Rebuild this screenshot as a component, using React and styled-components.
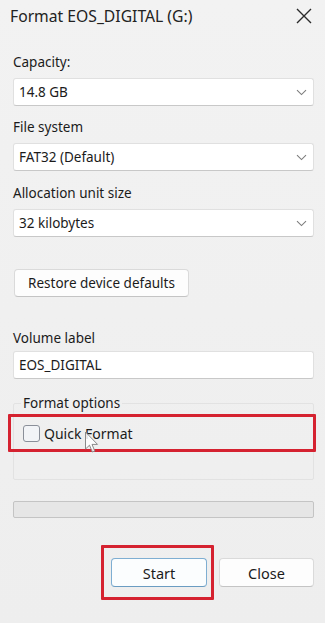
import React from 'react';
import styled, { createGlobalStyle } from 'styled-components';

const GlobalStyle = createGlobalStyle`
  html, body {
    margin: 0;
    padding: 0;
    background: #f0f0f0;
  }
  body {
    font-family: "Noto Sans", "Open Sans", "Liberation Sans", sans-serif;
    color: #1b1b1b;
  }
`;

const Window = styled.div`
  width: 325px;
  height: 623px;
  box-sizing: border-box;
  background: linear-gradient(#f2f2f2, #eeeeee);
  position: relative;
  overflow: hidden;
`;

const TitleBar = styled.div`
  height: 32px;
  display: flex;
  align-items: center;
  justify-content: space-between;
  padding: 0 13px 0 10px;
`;

const Title = styled.div`
  font-size: 15.7px;
  color: #222;
`;

const CloseIcon = styled.svg`
  width: 16px;
  height: 16px;
  display: block;
`;

const Body = styled.div`
  padding: 20px 11px 0 13px;
  display: flex;
  flex-direction: column;
`;

const Label = styled.div`
  font-size: 13.5px;
  line-height: 20px;
  height: 20px;
  margin-top: ${(p) => p.$top || 0}px;
`;

const Box = styled.div`
  height: 28px;
  box-sizing: border-box;
  margin-top: ${(p) => p.$top || 6}px;
  background: #fff;
  border: 1px solid #e0e0e0;
  border-bottom-color: #c8c8c8;
  border-radius: 3px;
  display: flex;
  align-items: center;
  justify-content: space-between;
  padding: 0 6px 0 5px;
  font-size: 13.5px;
`;

const Chevron = styled.svg`
  width: 11px;
  height: 7px;
  display: block;
`;

const RestoreButton = styled.button`
  align-self: flex-start;
  margin-top: 32px;
  margin-left: 1px;
  width: 175px;
  height: 28px;
  box-sizing: border-box;
  background: #fdfdfd;
  border: 1px solid #dadada;
  border-bottom-color: #c4c4c4;
  border-radius: 4px;
  font-family: inherit;
  font-size: 13.5px;
  color: #1b1b1b;
  padding: 0;
`;

const Group = styled.fieldset`
  margin: 14px 0 0;
  padding: 1px 0 27px;
  border: 1px solid #e2e2e2;
  border-radius: 2px;
  min-width: 0;
`;

const Legend = styled.legend`
  margin-left: 7px;
  padding: 0 2px;
  font-size: 13.5px;
  line-height: 20px;
`;

const Highlight = styled.div`
  border: 3px solid #d52230;
  border-radius: 1px;
  box-sizing: border-box;
  ${(p) => p.$wide && `
    margin: 0 -3px 0 -6px;
    height: 38px;
    display: flex;
    align-items: center;
    padding-left: 12px;
  `}
  ${(p) => p.$button && `
    padding: 10px 4px 10px 7px;
  `}
`;

const Check = styled.span`
  width: 17px;
  height: 17px;
  box-sizing: border-box;
  border: 1px solid #8a8f99;
  border-radius: 3px;
  background: #f2f4f7;
`;

const CheckText = styled.span`
  margin-left: 4px;
  font-size: 14px;
  color: #1b1b1b;
`;

const Progress = styled.div`
  margin-top: 21px;
  height: 17px;
  box-sizing: border-box;
  background: #e6e6e6;
  border: 1px solid #c4c4c4;
  border-radius: 2px;
`;

const Actions = styled.div`
  margin-top: 27px;
  display: flex;
  justify-content: flex-end;
  align-items: center;
  gap: 5px;
`;

const ActionButton = styled.button`
  width: ${(p) => p.$w}px;
  height: 29px;
  box-sizing: border-box;
  display: block;
  background: ${(p) => (p.$primary ? '#fbfdfe' : '#fdfdfd')};
  border: 1px solid ${(p) => (p.$primary ? '#7eaed2' : '#dadada')};
  border-bottom-color: ${(p) => (p.$primary ? '#6a9cc2' : '#c4c4c4')};
  border-radius: 4px;
  font-family: inherit;
  font-size: 14.5px;
  color: #1b1b1b;
  padding: 0;
`;

const Cursor = styled.svg`
  position: absolute;
  left: 84px;
  top: 431px;
  width: 16px;
  height: 25px;
`;

const Select = ({ value }) => (
  <Box>
    <span>{value}</span>
    <Chevron viewBox="0 0 11 7">
      <path d="M1 1.2 L5.5 5.6 L10 1.2" fill="none" stroke="#7d7d7d" strokeWidth="1.1" />
    </Chevron>
  </Box>
);

const App = () => {
  return (
    <Window>
      <GlobalStyle />
      <TitleBar>
        <Title>Format EOS_DIGITAL (G:)</Title>
        <CloseIcon viewBox="0 0 16 16">
          <path d="M1 1 L15 15 M15 1 L1 15" stroke="#2a2a2a" strokeWidth="1.4" />
        </CloseIcon>
      </TitleBar>
      <Body>
        <Label>Capacity:</Label>
        <Select value="14.8 GB" />
        <Label $top={11}>File system</Label>
        <Select value="FAT32 (Default)" />
        <Label $top={12}>Allocation unit size</Label>
        <Select value="32 kilobytes" />
        <RestoreButton>Restore device defaults</RestoreButton>
        <Label $top={31}>Volume label</Label>
        <Box $top={3}>EOS_DIGITAL</Box>
        <Group>
          <Legend>Format options</Legend>
          <Highlight $wide>
            <Check />
            <CheckText>Quick Format</CheckText>
          </Highlight>
        </Group>
        <Progress />
        <Actions>
          <Highlight $button>
            <ActionButton $primary $w={96}>Start</ActionButton>
          </Highlight>
          <ActionButton $w={95}>Close</ActionButton>
        </Actions>
      </Body>
      <Cursor viewBox="0 0 16 25">
        <path
          d="M1.5 1 L1.5 18 L5.5 14.2 L8.3 21 L10.8 20 L8 13.4 L13.5 13.4 Z"
          fill="rgba(255,255,255,0.85)"
          stroke="#8a8a8a"
          strokeWidth="1"
          strokeLinejoin="round"
        />
      </Cursor>
    </Window>
  );
};

export default App;
